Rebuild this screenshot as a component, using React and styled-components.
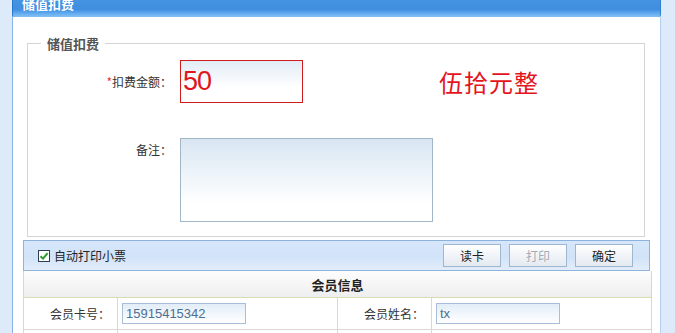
import React from "react";
import styled, { createGlobalStyle } from "styled-components";

const Global = createGlobalStyle`
  html, body { margin: 0; padding: 0; }
  body {
    font-family: "Liberation Sans", "Noto Sans CJK SC", sans-serif;
    font-size: 12px;
    color: #333;
    background: #dceafa;
    overflow: hidden;
  }
`;

const Page = styled.div`
  display: flex;
  height: 333px;
  background: #dceafa;
  overflow: hidden;
`;

const Frame = styled.div`
  margin-left: 12px;
  width: 647px;
  background: #fff;
  border-left: 1px solid #86b3e3;
  border-right: 1px solid #b5d0ee;
`;

const Header = styled.div`
  height: 17px;
  overflow: hidden;
  background: linear-gradient(to bottom, #4593e2 0%, #3f8edf 55%, #60aaef 78%, #86c0f4 100%);
  border-left: 1px solid #2a78cc;
  border-right: 1px solid #2f80d4;
  border-radius: 0 0 3px 3px;
  margin: 0 -1px;
`;

const Title = styled.div`
  color: #fff;
  font-weight: bold;
  font-size: 13px;
  line-height: 7px;
  padding-left: 9px;
  font-family: "Noto Sans CJK SC", sans-serif;
`;

const Body = styled.div`
  padding: 19px 10px 0 10px;
`;

const Group = styled.fieldset`
  margin: 0 5px 0 4px;
  padding: 0 0 14px;
  border: 1px solid #d5d5d5;
  min-width: 0;
`;

const Legend = styled.legend`
  margin-left: 13px;
  padding: 0 6px;
  font-weight: bold;
  font-size: 13px;
  line-height: 15px;
  color: #555;
  font-family: "Noto Sans CJK SC", sans-serif;
`;

const FieldRow = styled.div`
  display: flex;
  align-items: ${(p) => (p.$top ? "flex-start" : "center")};
  margin-top: ${(p) => p.$gap}px;
`;

const Label = styled.div`
  width: 144px;
  margin-right: 8px;
  text-align: right;
  font-size: 12px;
  color: #333;
  padding-top: ${(p) => (p.$top ? "3px" : "0")};
  font-family: "Noto Sans CJK SC", sans-serif;
`;

const Star = styled.span`
  color: #e33;
`;

const AmountInput = styled.input`
  box-sizing: border-box;
  width: 123px;
  height: 43px;
  border: 1px solid #d01c1c;
  background: linear-gradient(to bottom, #e2ecf6 0%, #fff 65%);
  color: #e0161c;
  font-family: "Liberation Sans", sans-serif;
  font-size: 27px;
  letter-spacing: -1px;
  padding: 0 2px;
  outline: none;
`;

const AmountWords = styled.div`
  margin-left: 136px;
  color: #e3141c;
  font-size: 24px;
  letter-spacing: 1px;
  font-family: "Noto Sans CJK SC", sans-serif;
`;

const Memo = styled.textarea`
  box-sizing: border-box;
  width: 253px;
  height: 84px;
  border: 1px solid #a3b6c6;
  background: linear-gradient(to bottom, #d8e6f2 0%, #fff 78%);
  resize: none;
  outline: none;
  margin: 0;
`;

const Toolbar = styled.div`
  box-sizing: border-box;
  margin-top: 3px;
  height: 31px;
  border: 1px solid #8db2dc;
  background: linear-gradient(to bottom, #d7e7fb 0%, #d1e3f8 55%, #e2edfb 100%);
  display: flex;
  align-items: center;
  padding: 0 16px 0 14px;
`;

const CheckBox = styled.span`
  box-sizing: border-box;
  width: 12px;
  height: 12px;
  border: 1px solid #2c3e50;
  background: #fff;
  display: inline-flex;
  align-items: center;
  justify-content: center;
`;

const CheckText = styled.span`
  margin-left: 4px;
  font-size: 12px;
  color: #222;
  font-family: "Noto Sans CJK SC", sans-serif;
`;

const Spacer = styled.div`
  flex: 1;
`;

const Buttons = styled.div`
  display: flex;
  gap: 8px;
`;

const Button = styled.button`
  box-sizing: border-box;
  width: 58px;
  height: 23px;
  border: 1px solid #9fb6cf;
  background: linear-gradient(to bottom, #ffffff 0%, #f1f4f8 50%, #e4eaf1 100%);
  color: ${(p) => (p.disabled ? "#a3abb6" : "#222")};
  font-size: 12px;
  font-family: "Noto Sans CJK SC", sans-serif;
  padding: 0;
`;

const Table = styled.table`
  width: 628px;
  border-collapse: collapse;
  table-layout: fixed;
`;

const Col = styled.col`
  width: ${(p) => p.$w}px;
`;

const HeadCell = styled.th`
  height: 26px;
  padding: 0;
  background: linear-gradient(to bottom, #fdfdfd 0%, #eeeeee 100%);
  border-left: 1px solid #d6d6d6;
  border-right: 1px solid #d6d6d6;
  border-bottom: 1px solid #d8dcb2;
  font-size: 13px;
  font-weight: bold;
  color: #222;
  font-family: "Noto Sans CJK SC", sans-serif;
`;

const LabelCell = styled.td`
  height: 31px;
  padding: 0 7px 0 0;
  border: 1px solid #d8d8d8;
  text-align: right;
  font-size: 12px;
  color: #333;
  font-family: "Noto Sans CJK SC", sans-serif;
`;

const ValueCell = styled.td`
  height: 31px;
  padding: 0 0 0 4px;
  border: 1px solid #d8d8d8;
`;

const MemberInput = styled.input`
  box-sizing: border-box;
  display: block;
  width: 124px;
  height: 21px;
  border: 1px solid #a8bed6;
  background: linear-gradient(to bottom, #e2edf8 0%, #fff 100%);
  color: #4d6f92;
  font-family: "Liberation Sans", sans-serif;
  font-size: 13px;
  padding: 0 3px;
  outline: none;
`;

const Check = () => (
  <svg width="10" height="10" viewBox="0 0 10 10">
    <path d="M1.5 5.2 L4 7.6 L8.6 2.2" fill="none" stroke="#2e9a2e" strokeWidth="2" />
  </svg>
);

export default function App() {
  return (
    <>
      <Global />
      <Page>
        <Frame>
          <Header>
            <Title>储值扣费</Title>
          </Header>
          <Body>
            <Group>
              <Legend>储值扣费</Legend>
              <FieldRow $gap={9}>
                <Label>
                  <Star>*</Star>扣费金额：
                </Label>
                <AmountInput defaultValue="50" readOnly />
                <AmountWords>伍拾元整</AmountWords>
              </FieldRow>
              <FieldRow $gap={35} $top>
                <Label $top>备注：</Label>
                <Memo />
              </FieldRow>
            </Group>
            <Toolbar>
              <CheckBox>
                <Check />
              </CheckBox>
              <CheckText>自动打印小票</CheckText>
              <Spacer />
              <Buttons>
                <Button>读卡</Button>
                <Button disabled>打印</Button>
                <Button>确定</Button>
              </Buttons>
            </Toolbar>
            <Table>
              <colgroup>
                <Col $w={94} />
                <Col $w={220} />
                <Col $w={94} />
                <Col $w={220} />
              </colgroup>
              <thead>
                <tr>
                  <HeadCell colSpan={4}>会员信息</HeadCell>
                </tr>
              </thead>
              <tbody>
                <tr>
                  <LabelCell>会员卡号：</LabelCell>
                  <ValueCell>
                    <MemberInput defaultValue="15915415342" readOnly />
                  </ValueCell>
                  <LabelCell>会员姓名：</LabelCell>
                  <ValueCell>
                    <MemberInput defaultValue="tx" readOnly />
                  </ValueCell>
                </tr>
                <tr>
                  <LabelCell></LabelCell>
                  <ValueCell></ValueCell>
                  <LabelCell></LabelCell>
                  <ValueCell></ValueCell>
                </tr>
              </tbody>
            </Table>
          </Body>
        </Frame>
      </Page>
    </>
  );
}
